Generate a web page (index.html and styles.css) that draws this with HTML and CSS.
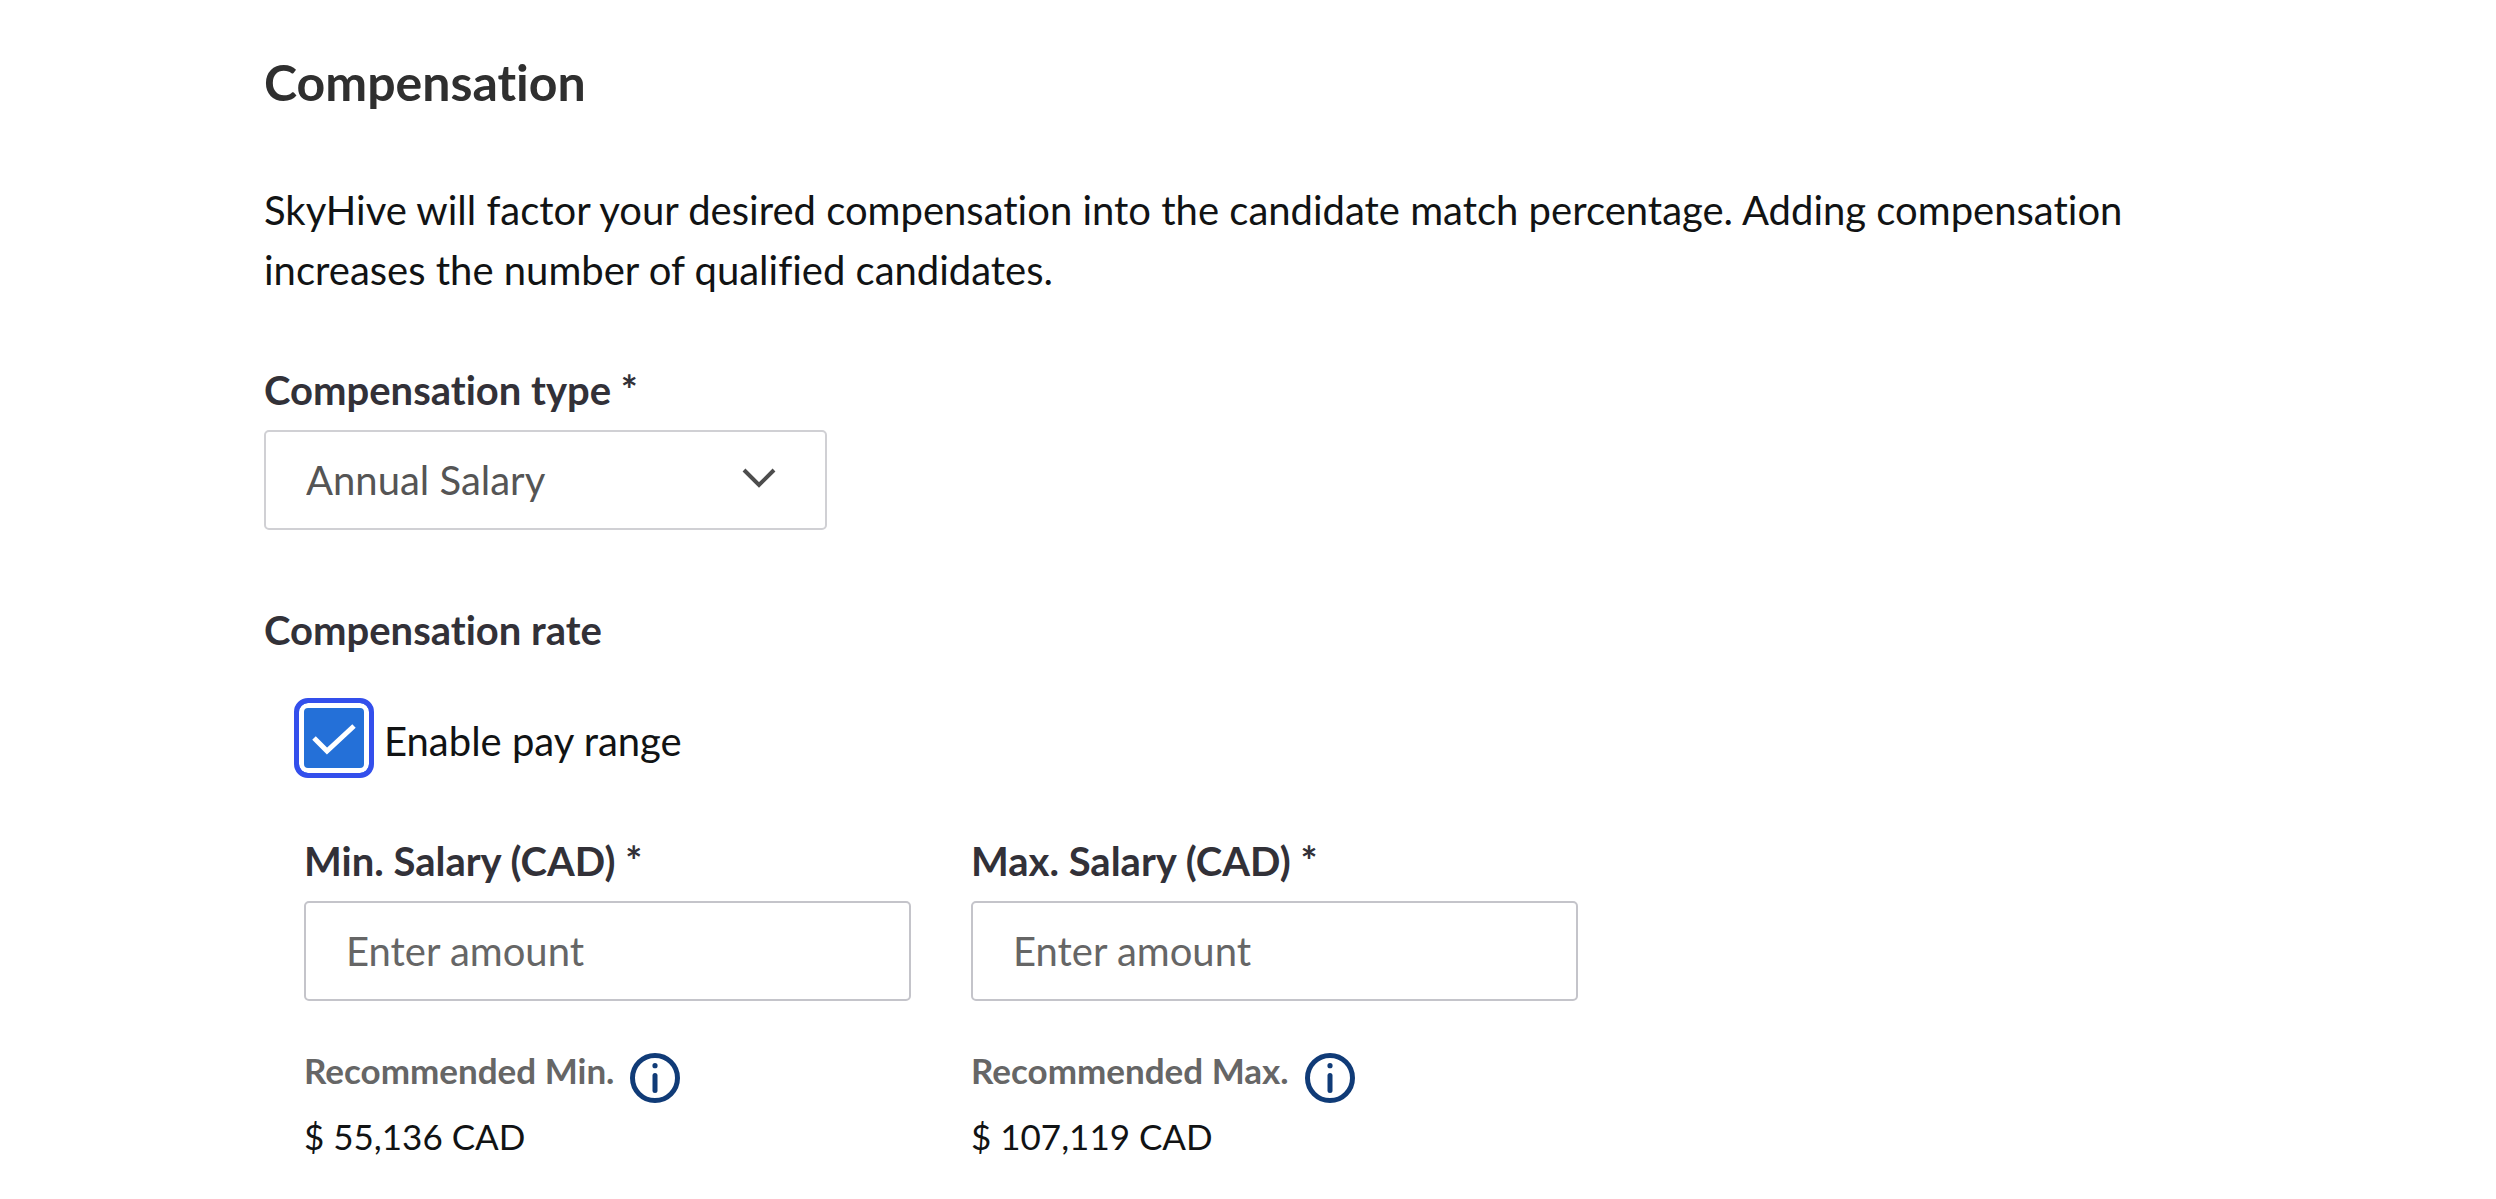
FILE: index.html
```html
<!DOCTYPE html>
<html lang="en">
<head>
<meta charset="utf-8">
<title>Compensation</title>
<link rel="stylesheet" href="styles.css">
</head>
<body>
<main class="page">
  <h1 class="title">Compensation</h1>
  <p class="intro">SkyHive will factor your desired compensation into the candidate match percentage. Adding compensation increases the number of qualified candidates.</p>
  <form class="form">
    <div class="field type-field">
      <label class="label" for="type">Compensation type *</label>
      <div class="select-wrap">
        <select class="control select" id="type"><option>Annual Salary</option></select>
        <svg class="chevron" viewBox="0 0 36 24" aria-hidden="true"><path d="M3 4l15 15L33 4"/></svg>
      </div>
    </div>
    <fieldset class="rate">
      <legend class="label">Compensation rate</legend>
      <label class="toggle">
        <span class="box">
          <input class="checkbox" type="checkbox" checked>
          <svg class="tick" viewBox="0 0 80 80" aria-hidden="true"><path d="M20 40l13 13L60 28"/></svg>
        </span>
        <span class="toggle-text">Enable pay range</span>
      </label>
      <div class="range">
        <div class="field">
          <label class="label" for="min">Min. Salary (CAD) *</label>
          <input class="control" id="min" type="text" placeholder="Enter amount">
          <div class="hint"><span>Recommended Min.</span>
            <svg class="info" viewBox="0 0 50 50" aria-hidden="true"><circle class="ring" cx="25" cy="25" r="22.5"/><circle cx="25" cy="12.7" r="2.6"/><path d="M25 22.5v15"/></svg>
          </div>
          <p class="amount">$ 55,136 CAD</p>
        </div>
        <div class="field">
          <label class="label" for="max">Max. Salary (CAD) *</label>
          <input class="control" id="max" type="text" placeholder="Enter amount">
          <div class="hint"><span>Recommended Max.</span>
            <svg class="info" viewBox="0 0 50 50" aria-hidden="true"><circle class="ring" cx="25" cy="25" r="22.5"/><circle cx="25" cy="12.7" r="2.6"/><path d="M25 22.5v15"/></svg>
          </div>
          <p class="amount">$ 107,119 CAD</p>
        </div>
      </div>
    </fieldset>
  </form>
</main>
</body>
</html>
```
FILE: styles.css
```css
* { box-sizing: border-box; }
body { margin: 0; background: #fff; color: #111314; font-family: Lato, sans-serif; font-size: 40px; line-height: 60px; font-variant-ligatures: none; }
.page { padding: 50px 264px 0; }
.title { margin: 0 0 66px; font-size: 50px; line-height: 64px; color: #2f2f2f; }
.intro { margin: 0 0 60px; max-width: 1920px; }
.label { display: block; padding: 0; font-weight: 700; color: #323138; line-height: 60px; }
.control { display: block; width: 100%; height: 100px; margin-top: 10px; padding: 0 40px; border: 2px solid #c4c4ca; border-radius: 5px; background: #fff; font: inherit; color: #555; }
.control::placeholder { color: #666; opacity: 1; }
.type-field { width: 563px; }
.select-wrap { position: relative; }
.select { appearance: none; border-color: #d0d0d4; }
.chevron { position: absolute; right: 50px; top: 36px; width: 36px; height: 24px; fill: none; stroke: #4d4d4d; stroke-width: 4; pointer-events: none; }
.rate { margin: 70px 0 0; padding: 0; border: 0; min-width: 0; }
.toggle { display: flex; align-items: center; gap: 10px; margin: 38px 0 0 30px; }
.toggle-text { padding-top: 6px; }
.box { position: relative; width: 80px; height: 80px; }
.checkbox { display: block; appearance: none; width: 80px; height: 80px; margin: 0; border: 5px solid #334fec; border-radius: 14px; background: #2470d8; box-shadow: inset 0 0 0 5px #fff; }
.tick { position: absolute; inset: 0; fill: none; stroke: #fff; stroke-width: 5; pointer-events: none; visibility: hidden; }
.checkbox:checked + .tick { visibility: visible; }
.range { display: flex; gap: 60px; margin: 53px 0 0 40px; }
.range .field { width: 607px; }
.hint { display: flex; gap: 16px; height: 60px; margin-top: 45px; font-size: 35px; line-height: 48px; font-weight: 700; color: #666; }
.info { width: 50px; height: 50px; margin-top: 7px; fill: #103b77; stroke: #103b77; stroke-width: 5; stroke-linecap: round; }
.info circle { stroke: none; }
.info .ring { fill: none; stroke: #103b77; }
.amount { margin: 0; font-size: 35px; line-height: 60px; }
```
